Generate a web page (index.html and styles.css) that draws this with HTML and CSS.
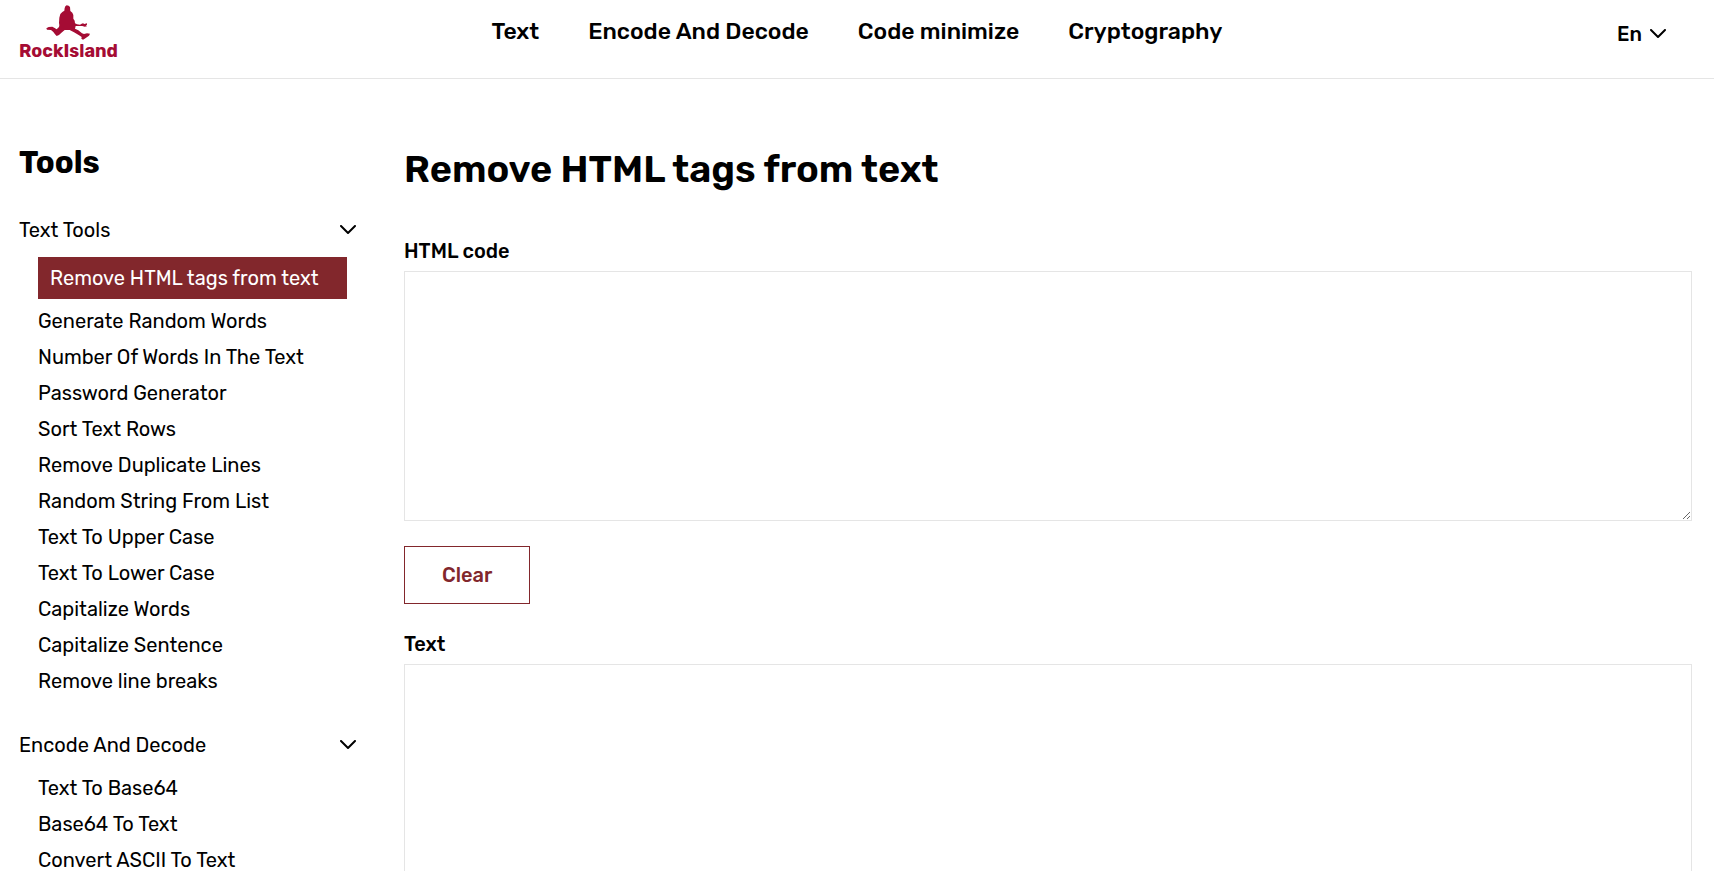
FILE: index.html
```html
<!DOCTYPE html>
<html lang="en">
<head>
  <meta charset="UTF-8">
  <meta name="viewport" content="width=device-width, initial-scale=1.0">
  <title>Remove HTML tags from text</title>
  <link rel="stylesheet" href="styles.css">
</head>
<body>
  <header class="header">
    <a href="#" class="logo">
      <svg class="logo-img" viewBox="60 16 300 108" aria-hidden="true">
        <path d="M199 20 L203 17 L209 18 L213 22 L214 34 L220 39 L223 46 L223 57 L227 63 L228 71 L234 74 L243 75 L248 72 L252 71 L256 73 L264 71 L264 75 L261 77 L264 80 L257 81 L250 79 L244 79 L230 79 L228 87 L238 92 L249 101 L255 103 L264 101 L273 102 L270 108 L257 117 L252 120 L247 117 L248 112 L239 106 L225 98 L212 91 L197 91 L189 98 L180 106 L173 109 L168 104 L163 97 L156 91 L144 90 L142 86 L149 82 L160 81 L167 85 L173 89 L180 82 L181 77 L180 70 L181 54 L184 43 L190 37 L196 33 L197 25 Z"/>
      </svg>
      <span class="logo-name">RockIsland</span>
    </a>
    <nav class="nav">
      <a href="#">Text</a>
      <a href="#">Encode And Decode</a>
      <a href="#">Code minimize</a>
      <a href="#">Cryptography</a>
    </nav>
    <button type="button" class="lang">
      En
      <svg class="arrow" viewBox="0 0 16 10" aria-hidden="true"><path d="M1 1l7 7 7-7"/></svg>
    </button>
  </header>

  <div class="container">
    <aside class="sidebar">
      <h2>Tools</h2>

      <button type="button" class="group">
        Text Tools
        <svg class="arrow" viewBox="0 0 16 10" aria-hidden="true"><path d="M1 1l7 7 7-7"/></svg>
      </button>
      <ul class="links">
        <li><a href="#" class="active">Remove HTML tags from text</a></li>
        <li><a href="#">Generate Random Words</a></li>
        <li><a href="#">Number Of Words In The Text</a></li>
        <li><a href="#">Password Generator</a></li>
        <li><a href="#">Sort Text Rows</a></li>
        <li><a href="#">Remove Duplicate Lines</a></li>
        <li><a href="#">Random String From List</a></li>
        <li><a href="#">Text To Upper Case</a></li>
        <li><a href="#">Text To Lower Case</a></li>
        <li><a href="#">Capitalize Words</a></li>
        <li><a href="#">Capitalize Sentence</a></li>
        <li><a href="#">Remove line breaks</a></li>
      </ul>

      <button type="button" class="group">
        Encode And Decode
        <svg class="arrow" viewBox="0 0 16 10" aria-hidden="true"><path d="M1 1l7 7 7-7"/></svg>
      </button>
      <ul class="links">
        <li><a href="#">Text To Base64</a></li>
        <li><a href="#">Base64 To Text</a></li>
        <li><a href="#">Convert ASCII To Text</a></li>
      </ul>
    </aside>

    <main class="content">
      <h1>Remove HTML tags from text</h1>
      <label for="code">HTML code</label>
      <textarea id="code"></textarea>
      <button type="button" class="btn" id="clear">Clear</button>
      <label for="result">Text</label>
      <textarea id="result"></textarea>
    </main>
  </div>
</body>
</html>
```
FILE: styles.css
```css
* {
  box-sizing: border-box;
}
body {
  margin: 0;
  background: #fff;
  color: #000;
  font-family: Rubik, Inter, sans-serif;
  font-size: 20px;
  line-height: 24px;
}
a {
  color: inherit;
  text-decoration: none;
}
button {
  background: none;
  border: none;
  padding: 0;
  color: inherit;
  font: inherit;
  cursor: pointer;
}

/* header */
.header {
  display: grid;
  grid-template-columns: 1fr auto 1fr;
  padding: 5px 19px 0;
  height: 79px;
  border-bottom: 1px solid #e5e5e5;
}
.logo {
  justify-self: start;
  color: #a50c34;
}
.logo-img {
  display: block;
  width: 100px;
  height: 36px;
  fill: #a50c34;
}
.logo-name {
  display: block;
  font-size: 18px;
  line-height: 20px;
  font-weight: 700;
}
.nav {
  display: flex;
  gap: 49px;
  padding-top: 14px;
  font-size: 23px;
  font-weight: 500;
}
.lang {
  display: flex;
  align-items: center;
  align-self: start;
  justify-self: end;
  gap: 8px;
  padding: 17px 29px 0 0;
  font-weight: 500;
}
.arrow {
  width: 16px;
  height: 10px;
  fill: none;
  stroke: #000;
  stroke-width: 2;
  stroke-linecap: round;
  stroke-linejoin: round;
}

/* page */
.container {
  display: grid;
  grid-template-columns: 337px 1fr;
  gap: 48px;
  padding: 65px 22px 40px 19px;
}
.sidebar h2 {
  margin: 0 0 36px;
  font-size: 31px;
  line-height: 38px;
  font-weight: 700;
}
.group {
  display: flex;
  align-items: center;
  justify-content: space-between;
  width: 100%;
}
.links {
  list-style: none;
  margin: 13px 0 34px;
  padding: 0 9px 0 19px;
}
.links li {
  padding: 6px 0;
}
.links a {
  display: block;
}
.links li:has(.active) {
  padding: 2px 0 4px;
}
.links .active {
  padding: 9px 12px;
  background: #82272c;
  color: #fff;
}
.content {
  display: flex;
  flex-direction: column;
  align-items: flex-start;
}
.content h1 {
  margin: 3px 0 48px;
  font-size: 38px;
  line-height: 44px;
  font-weight: 600;
}
.content label {
  margin-bottom: 8px;
  font-weight: 500;
}
textarea {
  width: 100%;
  height: 250px;
  padding: 12px;
  border: 1px solid #e5e5e5;
  outline: none;
  font: inherit;
  resize: vertical;
}
.btn {
  margin: 25px 0 28px;
  padding: 16px 37px;
  border: 1px solid #82272c;
  color: #82272c;
  font-weight: 500;
}
```
